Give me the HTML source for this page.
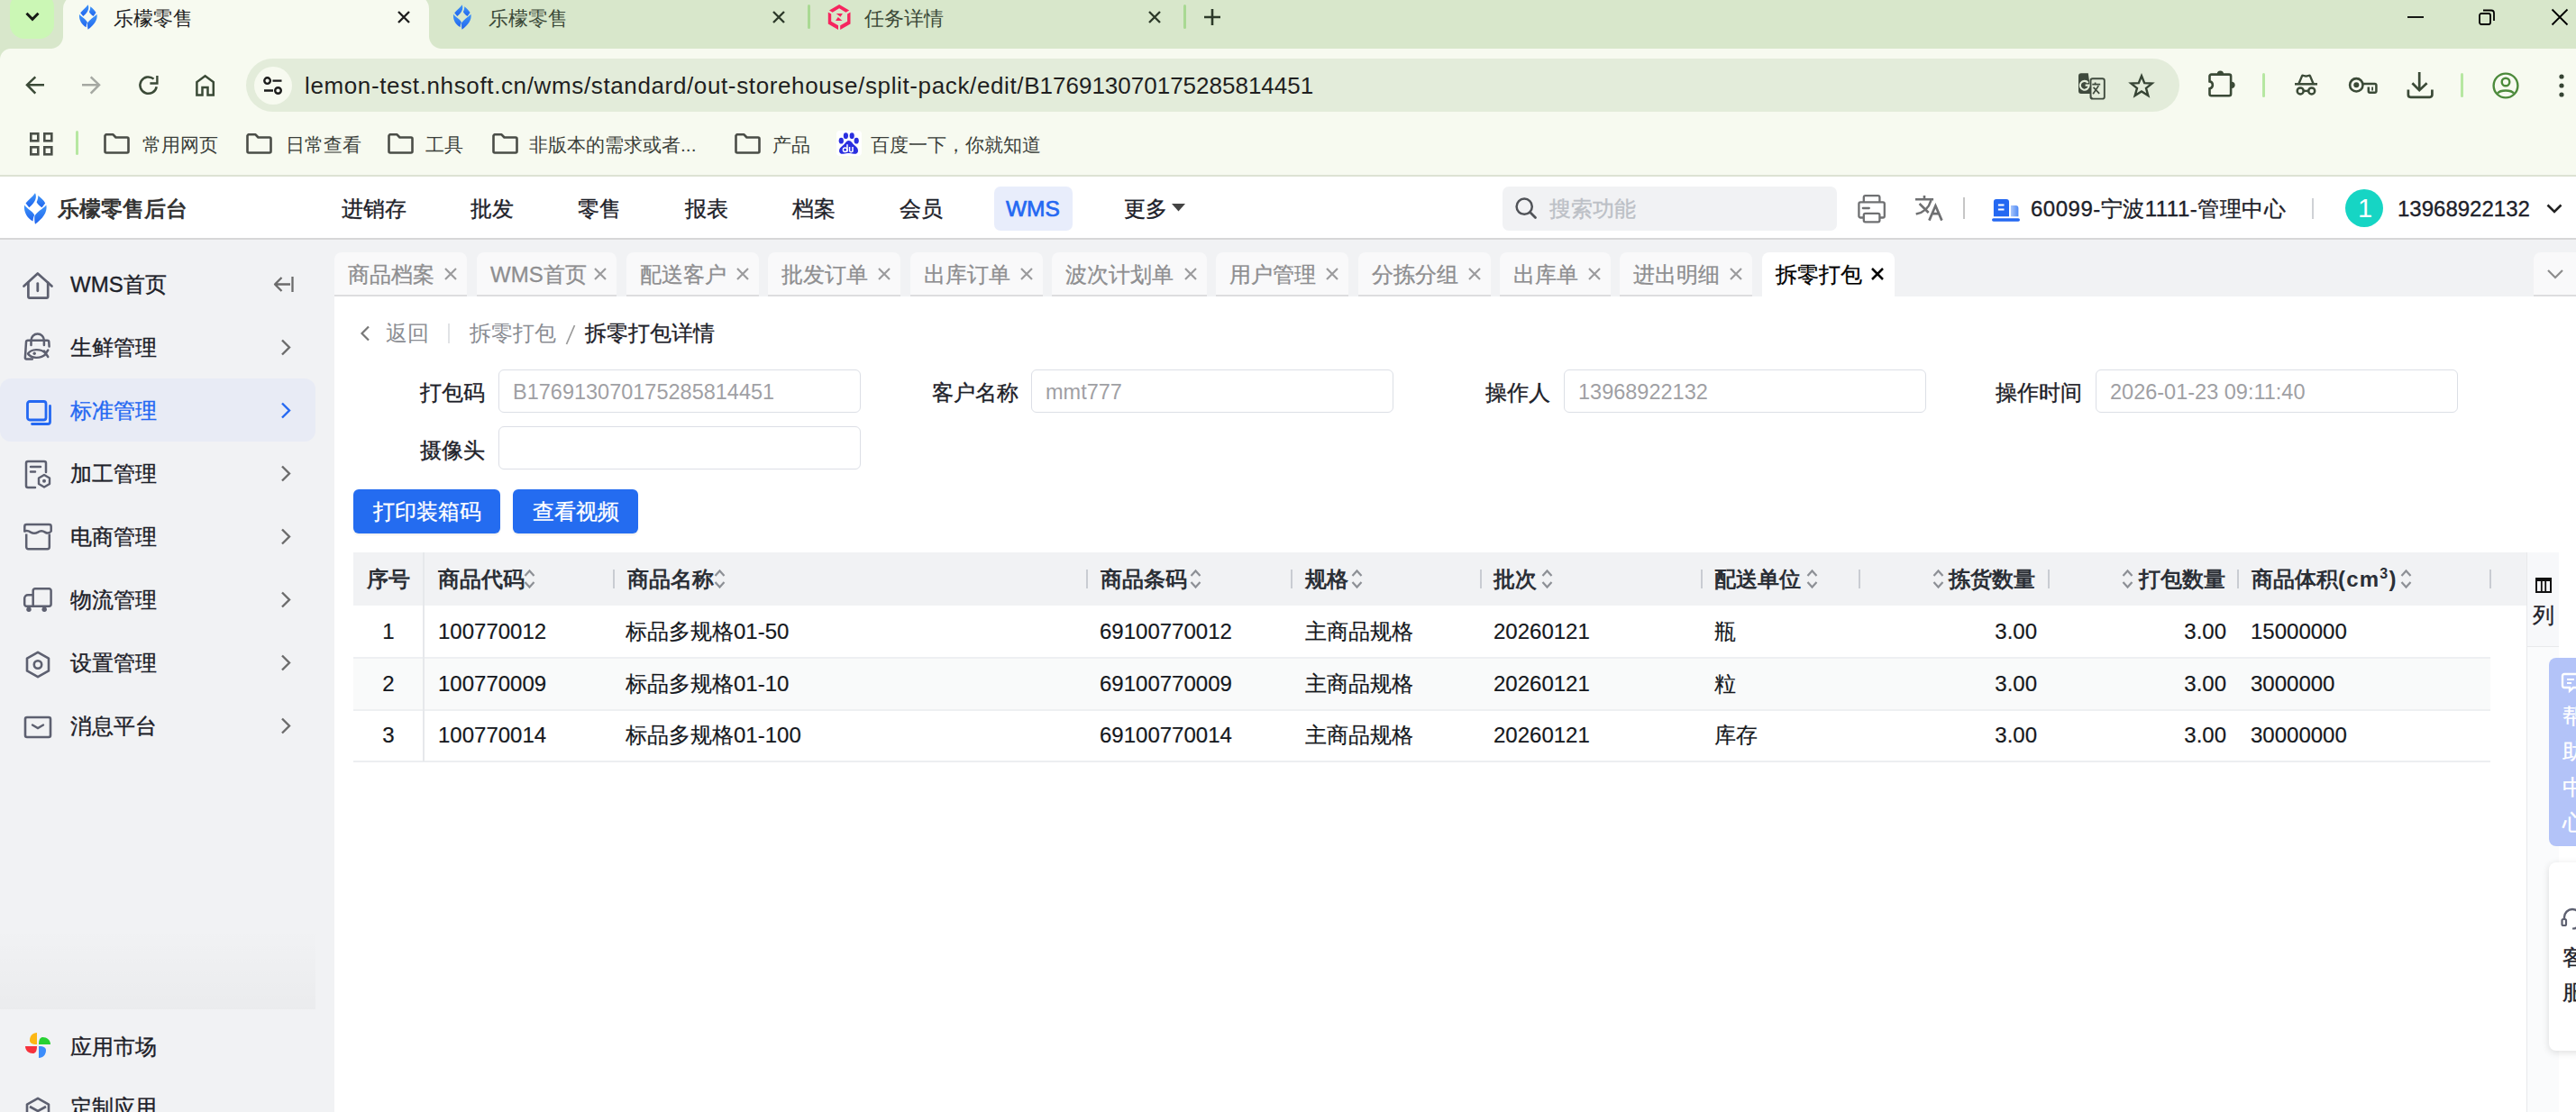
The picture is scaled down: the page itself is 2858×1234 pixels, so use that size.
<!DOCTYPE html>
<html><head><meta charset="utf-8">
<style>
*{box-sizing:border-box;margin:0;padding:0}
html,body{width:2858px;height:1234px;overflow:hidden;background:#fff;font-family:"Liberation Sans",sans-serif;}
.a{position:absolute}
svg{position:absolute;overflow:visible}
.nw{white-space:nowrap}
/* browser */
#frame{left:0;top:0;width:2858px;height:54px;background:#d8e7cb}
#toolbar{left:0;top:54px;width:2858px;height:142px;background:#f7faf0;border-bottom:2px solid #dde2d3}
.ttl{font-size:21.5px;line-height:24px;color:#1f1f1f;white-space:nowrap}
.bm{font-size:21px;line-height:24px;color:#3b3f3a;white-space:nowrap}
/* app */
#hdr{left:0;top:196px;width:2858px;height:70px;background:#fff;border-bottom:2px solid #d7d7d8}
.nav{-webkit-text-stroke-width:0.35px;font-size:24px;line-height:30px;color:#1d2129;white-space:nowrap;top:214px}
#side{left:0;top:266px;width:371px;height:968px;background:#f1f2f4}
#tabrow{left:371px;top:266px;width:2487px;height:63px;background:#f1f2f4}
#content{left:371px;top:329px;width:2487px;height:905px;background:#fff}
.si{-webkit-text-stroke-width:0.35px;font-size:24px;line-height:30px;color:#1d2129;white-space:nowrap;left:78px}
.tb{-webkit-text-stroke-width:0.3px;top:280px;height:49px;background:#f9f9fa;border-bottom:2px solid #dddddf;border-radius:8px 8px 0 0;font-size:24px;line-height:30px;color:#8e8e90;white-space:nowrap;padding-top:12px}
.lbl{-webkit-text-stroke-width:0.35px;font-size:24px;line-height:30px;color:#1d2129;white-space:nowrap;text-align:right}
.inp{height:48px;border:1.5px solid #dcdfe6;border-radius:6px;background:#fff;font-size:23.5px;line-height:49px;color:#9fa0a4;padding-left:15px;white-space:nowrap}
.btn{-webkit-text-stroke-width:0.3px;top:543px;height:49px;background:#246cf0;border-radius:6px;color:#fff;font-size:24px;line-height:49px;text-align:center;white-space:nowrap;box-shadow:0 2px 2px rgba(0,0,0,.06)}
.th{font-size:24px;line-height:30px;font-weight:bold;color:#2b2f36;white-space:nowrap;top:628px}
.td{-webkit-text-stroke-width:0.2px;font-size:24px;line-height:30px;color:#15181d;white-space:nowrap}
.rh{width:2px;height:21px;background:#c9ccd2;top:632px}
</style></head><body>

<!-- ============ BROWSER FRAME ============ -->
<div id="frame" class="a"></div>
<div id="toolbar" class="a"></div>

<!-- tabs -->
<div class="a" style="left:11px;top:-8px;width:49px;height:51px;background:#cbf7b5;border-radius:16px"></div>
<svg style="left:28px;top:13px" width="16" height="11" viewBox="0 0 16 11"><path d="M1.5 1.8L8 8.3L14.5 1.8" fill="none" stroke="#161a15" stroke-width="3"/></svg>
<div class="a" style="left:70px;top:-6px;width:406px;height:60px;background:#f7faf0;border-radius:16px 16px 0 0"></div>
<div class="a" style="left:56px;top:40px;width:14px;height:14px;background:radial-gradient(circle at 0 0,#d8e7cb 13.5px,#f7faf0 14.5px)"></div>
<div class="a" style="left:476px;top:40px;width:14px;height:14px;background:radial-gradient(circle at 100% 0,#d8e7cb 13.5px,#f7faf0 14.5px)"></div>
<div class="a" style="left:0;top:54px;width:12px;height:12px;background:radial-gradient(circle at 100% 100%,#f7faf0 11.5px,#d8e7cb 12.5px)"></div>
<svg style="left:88px;top:5px" width="20" height="28" viewBox="0 0 25 35"><defs><linearGradient id="lga" x1="0" y1="0" x2="0" y2="1"><stop offset="0" stop-color="#3f95f8"/><stop offset="1" stop-color="#2064ee"/></linearGradient></defs><path fill="url(#lga)" d="M12 0.3C14 4 13 10.5 5.3 16.3L1.5 11.6C4 8 9 5 12 0.3Z"/><path fill="url(#lga)" d="M15.3 2.9C18.5 5.5 21.5 8 23.2 11.4L19.5 16.3C17 14.5 14.8 12.5 13.6 10.2C14.8 8 15.3 5.5 15.3 2.9Z"/><path fill="url(#lga)" d="M0 13.4C3 17.5 9 20 11.2 24.6C10.2 27 9.6 29 9.6 31.6C3.5 28 -0.8 22 0 13.4Z"/><path fill="url(#lga)" d="M24.4 13.4C25.8 22 20 28.5 12 34.8C11.3 31.5 11 28 11.4 25.4C14 21 20 18 24.4 13.4Z"/></svg>
<div class="a ttl" style="left:126px;top:9px">乐檬零售</div>
<svg style="left:441px;top:12px" width="14" height="14" viewBox="0 0 14 14"><path d="M1 1L13 13M13 1L1 13" stroke="#1f1f1f" stroke-width="2.4"/></svg>
<svg style="left:503px;top:5px" width="20" height="28" viewBox="0 0 25 35"><defs><linearGradient id="lgb" x1="0" y1="0" x2="0" y2="1"><stop offset="0" stop-color="#3f95f8"/><stop offset="1" stop-color="#2064ee"/></linearGradient></defs><path fill="url(#lgb)" d="M12 0.3C14 4 13 10.5 5.3 16.3L1.5 11.6C4 8 9 5 12 0.3Z"/><path fill="url(#lgb)" d="M15.3 2.9C18.5 5.5 21.5 8 23.2 11.4L19.5 16.3C17 14.5 14.8 12.5 13.6 10.2C14.8 8 15.3 5.5 15.3 2.9Z"/><path fill="url(#lgb)" d="M0 13.4C3 17.5 9 20 11.2 24.6C10.2 27 9.6 29 9.6 31.6C3.5 28 -0.8 22 0 13.4Z"/><path fill="url(#lgb)" d="M24.4 13.4C25.8 22 20 28.5 12 34.8C11.3 31.5 11 28 11.4 25.4C14 21 20 18 24.4 13.4Z"/></svg>
<div class="a ttl" style="left:542px;top:9px;color:#3c4a38">乐檬零售</div>
<svg style="left:857px;top:12px" width="14" height="14" viewBox="0 0 14 14"><path d="M1 1L13 13M13 1L1 13" stroke="#2d3a2a" stroke-width="2.4"/></svg>
<div class="a" style="left:896px;top:5px;width:3px;height:27px;background:#a9d993;border-radius:2px"></div>
<svg style="left:912px;top:0px" width="38" height="38" viewBox="0 0 38 38"><g fill="#f6255f"><path d="M8 11.6L19.1 5L30.2 11.6L26.5 13.8L19.1 9.3L11.6 13.8Z"/><path d="M6.8 13.5L10.2 15.5V23.8L18 28.3V33L6.8 26.5Z"/><path d="M31.5 13.5V26.5L20.2 33V28.3L28.1 23.8V15.5Z"/><path d="M15.7 15H22.9L20.5 18.8Z"/><path d="M17.8 19L15 22.9H22.5Z"/></g></svg>
<div class="a ttl" style="left:959px;top:9px;color:#3c4a38">任务详情</div>
<svg style="left:1274px;top:12px" width="14" height="14" viewBox="0 0 14 14"><path d="M1 1L13 13M13 1L1 13" stroke="#2d3a2a" stroke-width="2.4"/></svg>
<div class="a" style="left:1313px;top:5px;width:3px;height:27px;background:#a9d993;border-radius:2px"></div>
<svg style="left:1336px;top:10px" width="18" height="18" viewBox="0 0 18 18"><path d="M9 0V18M0 9H18" stroke="#2d3a2a" stroke-width="2.6"/></svg>
<!-- window controls -->
<svg style="left:2671px;top:18px" width="18" height="2" viewBox="0 0 18 2"><path d="M0 1H18" stroke="#000" stroke-width="1.8"/></svg>
<svg style="left:2750px;top:10px" width="18" height="18" viewBox="0 0 18 18"><rect x="1" y="5" width="12" height="12" rx="2" fill="none" stroke="#000" stroke-width="1.8"/><path d="M5 1.5 H14 A3 3 0 0 1 17 4.5 V13" fill="none" stroke="#000" stroke-width="1.8"/></svg>
<svg style="left:2831px;top:10px" width="18" height="18" viewBox="0 0 18 18"><path d="M0.5 0.5L17.5 17.5M17.5 0.5L0.5 17.5" stroke="#000" stroke-width="1.8"/></svg>

<!-- toolbar -->
<svg style="left:28px;top:84px" width="22" height="22" viewBox="0 0 22 22"><path d="M21 10.2H2.8M11.3 1.3L2 10.2L11.3 19.6" fill="none" stroke="#3b4a37" stroke-width="2.5"/></svg>
<svg style="left:91px;top:84px" width="22" height="22" viewBox="0 0 22 22"><path d="M0 10.2H18.2M9.7 1.3L19 10.2L9.7 19.6" fill="none" stroke="#a5a8a2" stroke-width="2.5"/></svg>
<svg style="left:154px;top:84px" width="22" height="22" viewBox="0 0 22 22"><path d="M16.6 3.6A9.2 9.2 0 1 0 19.7 12.2" fill="none" stroke="#3b4a37" stroke-width="2.5"/><path d="M20.4 0V8.5H12.4" fill="none" stroke="#3b4a37" stroke-width="2.4"/></svg>
<svg style="left:217px;top:82px" width="22" height="25" viewBox="0 0 22 25"><path d="M1.4 23.5V9.1L10.6 2.2L19.8 9.1V23.5H13.5V15.1H7.5V23.5Z" fill="none" stroke="#3b4a37" stroke-width="2.5" stroke-linejoin="miter"/></svg>
<div class="a" style="left:273px;top:65px;width:2145px;height:59px;background:#e3ecda;border-radius:30px"></div>
<div class="a" style="left:282px;top:74px;width:42px;height:42px;background:#f7faf0;border-radius:21px"></div>
<svg style="left:292px;top:85px" width="22" height="21" viewBox="0 0 22 21"><circle cx="4.6" cy="4.6" r="3.3" fill="none" stroke="#1b1b1b" stroke-width="2.4"/><path d="M10.5 4.6H20.5M1 15.5H11" stroke="#1b1b1b" stroke-width="2.4"/><circle cx="16.5" cy="15.5" r="3.3" fill="none" stroke="#1b1b1b" stroke-width="2.4"/></svg>
<div class="a nw" id="url" style="left:338px;top:78px;font-size:26px;line-height:34px;color:#1f1f1f"><span style="letter-spacing:0.63px">lemon-test.nhsoft.cn/wms/standard/out-storehouse/split-pack/edit/</span>B176913070175285814451</div>
<svg style="left:2306px;top:81px" width="30" height="30" viewBox="0 0 30 30"><rect x="13.5" y="6.3" width="15.3" height="22.3" rx="2.2" fill="none" stroke="#3f4a3d" stroke-width="1.9"/><path d="M3 0.2H10.8L14.4 26.5L16.8 28.6H14.5L13.3 23H3A3 3 0 0 1 0 20V3.2A3 3 0 0 1 3 0.2Z" fill="#3f4a3d"/><path d="M10.6 10.8A4.9 4.9 0 1 0 11.6 13.6H7.6" fill="none" stroke="#e3ecda" stroke-width="2.1"/><path d="M15.3 12.6H24.2M18.6 10.6V12.6M22.3 14.1L16.2 23.2M16.6 15.8L23.2 22.8" fill="none" stroke="#3f4a3d" stroke-width="1.7"/></svg>
<svg style="left:2362px;top:82px" width="28" height="26" viewBox="0 0 28 26"><path d="M14 2.2L17.2 10.2L25.6 10.6L19 15.9L21.3 24L14 19.4L6.7 24L9 15.9L2.4 10.6L10.8 10.2Z" fill="none" stroke="#364434" stroke-width="2.4" stroke-linejoin="miter"/></svg>
<svg style="left:2450px;top:78px" width="30" height="30" viewBox="0 0 30 30"><path d="M3.5 4.6H23.1A2 2 0 0 1 25.1 6.6V26.2A2 2 0 0 1 23.1 28.2H3.5A2 2 0 0 1 1.5 26.2V20.3A4 4 0 0 0 1.5 12.4V6.6A2 2 0 0 1 3.5 4.6Z" fill="none" stroke="#3b4a37" stroke-width="2.6"/><path d="M9.8 4A3.6 3.6 0 0 1 17 4Z" fill="#3b4a37"/><path d="M26 12.7A3.6 3.6 0 0 1 26 19.9Z" fill="#3b4a37"/></svg>
<div class="a" style="left:2510px;top:81px;width:3px;height:27px;background:#b6e7a1;border-radius:2px"></div>
<svg style="left:2545px;top:81px" width="28" height="24" viewBox="0 0 28 24"><path d="M1 12.3H26" stroke="#3b4a37" stroke-width="2.5"/><path d="M5.6 11.5L8.9 3.6Q9.4 2.6 10.5 2.9L13.5 3.6L16.5 2.9Q17.6 2.6 18.1 3.6L21.4 11.5" fill="none" stroke="#3b4a37" stroke-width="2.4" stroke-linejoin="round"/><circle cx="7.2" cy="19.9" r="3.5" fill="none" stroke="#3b4a37" stroke-width="2.5"/><circle cx="19.7" cy="19.9" r="3.5" fill="none" stroke="#3b4a37" stroke-width="2.5"/><path d="M10.6 19.9H16.3" stroke="#3b4a37" stroke-width="2.4"/></svg>
<svg style="left:2605px;top:85px" width="33" height="20" viewBox="0 0 33 20"><circle cx="9.3" cy="9.3" r="7.2" fill="none" stroke="#3b4a37" stroke-width="2.6"/><circle cx="9.3" cy="9.3" r="3" fill="#3b4a37"/><path d="M16 7.9H29.9A1.5 1.5 0 0 1 31.4 9.4V16.3A1.5 1.5 0 0 1 29.9 17.8H24.3A1.5 1.5 0 0 1 22.8 16.3V11.4" fill="none" stroke="#3b4a37" stroke-width="2.5"/><path d="M27.1 11.5V15.5" stroke="#3b4a37" stroke-width="1.8"/></svg>
<svg style="left:2669px;top:79px" width="32" height="31" viewBox="0 0 32 31"><path d="M15.2 1V20.5M7.4 13.3L15.2 21.2L23.6 13.3" fill="none" stroke="#3b4a37" stroke-width="2.7"/><path d="M2.9 20.5V26.3A2.5 2.5 0 0 0 5.4 28.8H26.9A2.5 2.5 0 0 0 29.4 26.3V20.5" fill="none" stroke="#3b4a37" stroke-width="2.7"/></svg>
<div class="a" style="left:2730px;top:81px;width:3px;height:27px;background:#b6e7a1;border-radius:2px"></div>
<svg style="left:2765px;top:80px" width="30" height="30" viewBox="0 0 30 30"><circle cx="15" cy="15" r="13.4" fill="none" stroke="#4c8a3b" stroke-width="2.4"/><circle cx="15" cy="11" r="4.3" fill="none" stroke="#4c8a3b" stroke-width="2.4"/><path d="M6 23.5C9 19.5 21 19.5 24 23.5" fill="none" stroke="#4c8a3b" stroke-width="2.4"/></svg>
<svg style="left:2839px;top:82px" width="6" height="26" viewBox="0 0 6 26"><circle cx="3" cy="3" r="2.6" fill="#364434"/><circle cx="3" cy="13" r="2.6" fill="#364434"/><circle cx="3" cy="23" r="2.6" fill="#364434"/></svg>

<!-- bookmarks -->
<svg style="left:33px;top:147px" width="26" height="26" viewBox="0 0 26 26"><rect x="1.3" y="1.3" width="8" height="8" fill="none" stroke="#4a4f48" stroke-width="2.6"/><rect x="16.3" y="1.3" width="8" height="8" fill="none" stroke="#4a4f48" stroke-width="2.6"/><rect x="1.3" y="16.3" width="8" height="8" fill="none" stroke="#4a4f48" stroke-width="2.6"/><rect x="16.3" y="16.3" width="8" height="8" fill="none" stroke="#4a4f48" stroke-width="2.6"/></svg>
<div class="a" style="left:84px;top:145px;width:3px;height:27px;background:#b6e7a1;border-radius:2px"></div>
<svg style="left:115px;top:148px" width="29" height="23" viewBox="0 0 29 23"><path d="M2.5 1.3H10.5L13.5 4.5H26A1.5 1.5 0 0 1 27.5 6V20A1.5 1.5 0 0 1 26 21.5H3A1.5 1.5 0 0 1 1.5 20V2.5Z" fill="none" stroke="#4a4d47" stroke-width="2.6" stroke-linejoin="round"/></svg>
<div class="a bm" style="left:158px;top:149px">常用网页</div>
<svg style="left:273px;top:148px" width="29" height="23" viewBox="0 0 29 23"><path d="M2.5 1.3H10.5L13.5 4.5H26A1.5 1.5 0 0 1 27.5 6V20A1.5 1.5 0 0 1 26 21.5H3A1.5 1.5 0 0 1 1.5 20V2.5Z" fill="none" stroke="#4a4d47" stroke-width="2.6" stroke-linejoin="round"/></svg>
<div class="a bm" style="left:317px;top:149px">日常查看</div>
<svg style="left:430px;top:148px" width="29" height="23" viewBox="0 0 29 23"><path d="M2.5 1.3H10.5L13.5 4.5H26A1.5 1.5 0 0 1 27.5 6V20A1.5 1.5 0 0 1 26 21.5H3A1.5 1.5 0 0 1 1.5 20V2.5Z" fill="none" stroke="#4a4d47" stroke-width="2.6" stroke-linejoin="round"/></svg>
<div class="a bm" style="left:472px;top:149px">工具</div>
<svg style="left:546px;top:148px" width="29" height="23" viewBox="0 0 29 23"><path d="M2.5 1.3H10.5L13.5 4.5H26A1.5 1.5 0 0 1 27.5 6V20A1.5 1.5 0 0 1 26 21.5H3A1.5 1.5 0 0 1 1.5 20V2.5Z" fill="none" stroke="#4a4d47" stroke-width="2.6" stroke-linejoin="round"/></svg>
<div class="a bm" style="left:587px;top:149px">非版本的需求或者...</div>
<svg style="left:815px;top:148px" width="29" height="23" viewBox="0 0 29 23"><path d="M2.5 1.3H10.5L13.5 4.5H26A1.5 1.5 0 0 1 27.5 6V20A1.5 1.5 0 0 1 26 21.5H3A1.5 1.5 0 0 1 1.5 20V2.5Z" fill="none" stroke="#4a4d47" stroke-width="2.6" stroke-linejoin="round"/></svg>
<div class="a bm" style="left:857px;top:149px">产品</div>
<div class="a" style="left:928px;top:145px;width:28px;height:28px;background:#fff;border-radius:4px"></div>
<svg style="left:928px;top:145px" width="28" height="28" viewBox="0 0 28 28"><g fill="#2a2fe0"><ellipse cx="5.3" cy="11.2" rx="2.6" ry="3.4"/><ellipse cx="10.4" cy="5.7" rx="2.6" ry="3.4"/><ellipse cx="17.2" cy="5.7" rx="2.6" ry="3.4"/><ellipse cx="22.2" cy="11.2" rx="2.6" ry="3.4"/><path d="M13.6 10.9C16.5 10.9 18 14.5 20.5 16.5C23 18.5 24 20 24 22.5C24 25 22 26 19.5 25.8C17 25.6 15.5 25 13.6 25C11.5 25 10 25.6 7.5 25.8C5 26 3 25 3 22.5C3 20 4.5 18.5 7 16.5C9.5 14.5 11 10.9 13.6 10.9Z"/></g><circle cx="9.6" cy="21.3" r="2.2" fill="none" stroke="#fff" stroke-width="1.5"/><path d="M12 15.2V23.6M14.6 18V22A1.7 1.7 0 0 0 18 22V18M18 21V23.6" fill="none" stroke="#fff" stroke-width="1.5"/></svg>
<div class="a bm" style="left:966px;top:149px">百度一下，你就知道</div>

<!-- ============ APP HEADER ============ -->
<div id="hdr" class="a"></div>

<svg style="left:27px;top:214px" width="25" height="35" viewBox="0 0 25 35"><defs><linearGradient id="lgh" x1="0" y1="0" x2="0" y2="1"><stop offset="0" stop-color="#3f95f8"/><stop offset="1" stop-color="#2064ee"/></linearGradient></defs><path fill="url(#lgh)" d="M12 0.3C14 4 13 10.5 5.3 16.3L1.5 11.6C4 8 9 5 12 0.3Z"/><path fill="url(#lgh)" d="M15.3 2.9C18.5 5.5 21.5 8 23.2 11.4L19.5 16.3C17 14.5 14.8 12.5 13.6 10.2C14.8 8 15.3 5.5 15.3 2.9Z"/><path fill="url(#lgh)" d="M0 13.4C3 17.5 9 20 11.2 24.6C10.2 27 9.6 29 9.6 31.6C3.5 28 -0.8 22 0 13.4Z"/><path fill="url(#lgh)" d="M24.4 13.4C25.8 22 20 28.5 12 34.8C11.3 31.5 11 28 11.4 25.4C14 21 20 18 24.4 13.4Z"/></svg>
<div class="a nw" style="left:64px;top:217px;font-size:24px;line-height:30px;font-weight:bold;color:#333">乐檬零售后台</div>
<div class="a nav" style="left:379px;top:217px">进销存</div>
<div class="a nav" style="left:522px;top:217px">批发</div>
<div class="a nav" style="left:641px;top:217px">零售</div>
<div class="a nav" style="left:760px;top:217px">报表</div>
<div class="a nav" style="left:879px;top:217px">档案</div>
<div class="a nav" style="left:998px;top:217px">会员</div>
<div class="a" style="left:1103px;top:207px;width:87px;height:49px;background:#e8edfb;border-radius:7px"></div>
<div class="a nav" style="left:1116px;top:217px;color:#2468f2;font-size:24.5px;-webkit-text-stroke-width:0.7px">WMS</div>
<div class="a nav" style="left:1247px;top:217px">更多</div>
<svg style="left:1300px;top:226px" width="15" height="9" viewBox="0 0 15 9"><path d="M0 0H15L7.5 8.5Z" fill="#444"/></svg>
<div class="a" style="left:1667px;top:207px;width:371px;height:49px;background:#f1f2f4;border-radius:7px"></div>
<svg style="left:1681px;top:219px" width="24" height="24" viewBox="0 0 24 24"><circle cx="10.2" cy="10.2" r="8.6" fill="none" stroke="#505358" stroke-width="2.5"/><path d="M16.5 16.5L22.5 22.5" stroke="#505358" stroke-width="2.8" stroke-linecap="round"/></svg>
<div class="a nav" style="left:1719px;top:217px;color:#bcc0c6">搜索功能</div>
<svg style="left:2060px;top:215px" width="34" height="34" viewBox="0 0 34 34"><rect x="7.8" y="2.2" width="17.6" height="8.8" rx="1.8" fill="none" stroke="#6f7072" stroke-width="2.3"/><path d="M7.8 26.5H4.2A1.8 1.8 0 0 1 2.4 24.7V11.1A1.8 1.8 0 0 1 4.2 9.3H29A1.8 1.8 0 0 1 30.8 11.1V24.7A1.8 1.8 0 0 1 29 26.5H25.4" fill="#fff" stroke="#6f7072" stroke-width="2.3"/><rect x="7.8" y="21.8" width="17.6" height="9.6" rx="1.8" fill="#fff" stroke="#6f7072" stroke-width="2.3"/><path d="M6.8 16H13.8" stroke="#6f7072" stroke-width="2.3" stroke-linecap="round"/></svg>
<svg style="left:2122px;top:215px" width="34" height="32" viewBox="0 0 34 32"><path d="M3 6.3H23.1M13 2V6.3M20.4 7.5C18.5 14 14 20.5 3.7 22.6M7.6 11L17.7 21" fill="none" stroke="#6f7072" stroke-width="2.6"/><path d="M18.4 29.6L25.4 13.3L32.4 29.6M21 22.2H29.6" fill="none" stroke="#6f7072" stroke-width="2.7"/></svg>
<div class="a" style="left:2178px;top:219px;width:2px;height:24px;background:#c6c6c6"></div>
<svg style="left:2208px;top:219px" width="35" height="28" viewBox="0 0 35 28"><defs><linearGradient id="cg" x1="0" y1="0" x2="1" y2="0"><stop offset="0" stop-color="#a9c6fb"/><stop offset="1" stop-color="#4f8af5"/></linearGradient></defs><path d="M3.9 21.3V4.9A3 3 0 0 1 6.9 1.9H18A3 3 0 0 1 21 4.9V21.3Z" fill="#2468f2"/><path d="M8.9 8.5H15.5M8.9 13.6H15.5" stroke="#fff" stroke-width="2"/><path d="M22.9 21.3V8.9H28.4A3 3 0 0 1 31.4 11.9V21.3Z" fill="url(#cg)"/><rect x="2" y="23.3" width="31" height="3.5" rx="1.75" fill="#2468f2"/></svg>
<div class="a nav" style="left:2253px;top:217px;letter-spacing:0.5px">60099-宁波1111-管理中心</div>
<div class="a" style="left:2565px;top:220px;width:2px;height:23px;background:#cfd1d5"></div>
<div class="a" style="left:2602px;top:210px;width:42px;height:42px;border-radius:21px;background:#16d5c4"></div>
<div class="a nw" style="left:2603px;top:214px;width:42px;text-align:center;font-size:29px;line-height:34px;color:#fff">1</div>
<div class="a nav" style="left:2660px;top:217px;font-size:24px">13968922132</div>
<svg style="left:2825px;top:226px" width="18" height="11" viewBox="0 0 18 11"><path d="M1.5 1.5L9 9L16.5 1.5" fill="none" stroke="#222" stroke-width="2.6"/></svg>

<!-- ============ SIDEBAR / TABROW / CONTENT ============ -->
<div id="side" class="a"></div>

<div class="a" style="left:0;top:420px;width:350px;height:70px;background:#e8ebf5;border-radius:12px"></div>
<svg style="left:25px;top:302px" width="34" height="30" viewBox="0 0 34 30"><path d="M1.5 15.5L16.8 1.5L32.5 15.5" fill="none" stroke="#5d6070" stroke-width="2.7" stroke-linecap="round" stroke-linejoin="round"/><path d="M6.4 11.5V27A1.6 1.6 0 0 0 8 28.6H26.6A1.6 1.6 0 0 0 28.2 27V11.5" fill="none" stroke="#5d6070" stroke-width="2.7" stroke-linecap="round"/><path d="M16.8 12.6V20.8" stroke="#5d6070" stroke-width="2.8" stroke-linecap="round"/></svg>
<div class="a si" style="top:301px">WMS首页</div>
<svg style="left:303px;top:306px" width="23" height="19" viewBox="0 0 23 19"><path d="M21.5 1V18M19 9.5H2M9.5 2L2 9.5L9.5 17" fill="none" stroke="#6b6b6b" stroke-width="2.3" stroke-linejoin="round"/></svg>

<svg style="left:26px;top:370px" width="31" height="32" viewBox="0 0 31 32"><path d="M8.5 13V7.7A7.2 7.2 0 0 1 22.9 7.7V13" fill="none" stroke="#5d6070" stroke-width="2.5" stroke-linecap="round"/><path d="M9.8 28.5H3.2A1.3 1.3 0 0 1 1.9 27.1L3 9.6A1.9 1.9 0 0 1 4.9 7.7H26.4A1.9 1.9 0 0 1 28.3 9.6L28.6 14.5" fill="none" stroke="#5d6070" stroke-width="2.5" stroke-linecap="round" stroke-linejoin="round"/><path d="M5 22.5C8.5 17 19 16.5 24.5 21.8M5 22.5C8.5 28 19 28.5 24.5 23.2M23 19.5L27.3 26M27.3 18.5L23.6 24" fill="none" stroke="#5d6070" stroke-width="2.4" stroke-linecap="round"/><circle cx="12.2" cy="22.3" r="1.7" fill="#5d6070"/></svg>
<div class="a si" style="top:371px">生鲜管理</div>

<svg style="left:29px;top:444px" width="28" height="28" viewBox="0 0 28 28"><rect x="1.5" y="1.5" width="20.5" height="20.5" rx="2.5" fill="none" stroke="#2468f2" stroke-width="2.8"/><path d="M26.5 6.5V24A2.5 2.5 0 0 1 24 26.5H6.5" fill="none" stroke="#2468f2" stroke-width="2.8" stroke-linecap="round"/></svg>
<div class="a si" style="top:441px;color:#2468f2">标准管理</div>

<svg style="left:27px;top:510px" width="31" height="33" viewBox="0 0 31 33"><path d="M12 31H4A2 2 0 0 1 2 29V4A2 2 0 0 1 4 2H22A2 2 0 0 1 24 4V14" fill="none" stroke="#5d6070" stroke-width="2.5" stroke-linecap="round"/><path d="M7 8H18M7 13.5H12" stroke="#5d6070" stroke-width="2.5" stroke-linecap="round"/><path d="M22 17L28 20.5V27L22 30.5L16 27V20.5Z" fill="none" stroke="#5d6070" stroke-width="2.4" stroke-linejoin="round"/><circle cx="22" cy="23.8" r="2" fill="#5d6070"/></svg>
<div class="a si" style="top:511px">加工管理</div>

<svg style="left:26px;top:581px" width="32" height="30" viewBox="0 0 32 30"><path d="M1.3 8.5V3.3A2.2 2.2 0 0 1 3.5 1.1H28.5A2.2 2.2 0 0 1 30.7 3.3V8.5Q27.5 12 24 9.6Q20 7 16 9.6Q12 12 8 9.6Q4.5 7.3 1.3 8.5Z" fill="none" stroke="#5d6070" stroke-width="2.5" stroke-linejoin="round"/><path d="M3.2 11.5V26A2.2 2.2 0 0 0 5.4 28.2H26.6A2.2 2.2 0 0 0 28.8 26V11.5" fill="none" stroke="#5d6070" stroke-width="2.5"/></svg>
<div class="a si" style="top:581px">电商管理</div>

<svg style="left:26px;top:652px" width="32" height="28" viewBox="0 0 32 28"><path d="M10.7 20.8V3.5A2.2 2.2 0 0 1 12.9 1.3H28.4A2.2 2.2 0 0 1 30.6 3.5V18.6A2.2 2.2 0 0 1 28.4 20.8H10.7M10.7 8.3H5A3.8 3.8 0 0 0 1.2 12.1V18.6A2.2 2.2 0 0 0 3.4 20.8H10.7" fill="none" stroke="#5d6070" stroke-width="2.5" stroke-linejoin="round"/><circle cx="6" cy="24.2" r="2.7" fill="#5d6070"/><circle cx="23.2" cy="24.2" r="2.7" fill="#5d6070"/></svg>
<div class="a si" style="top:651px">物流管理</div>

<svg style="left:28px;top:722px" width="28" height="31" viewBox="0 0 28 31"><path d="M14 1.8L26 8.6V22.4L14 29.2L2 22.4V8.6Z" fill="none" stroke="#5d6070" stroke-width="2.6" stroke-linejoin="round"/><circle cx="14" cy="15.5" r="4.2" fill="none" stroke="#5d6070" stroke-width="2.6"/></svg>
<div class="a si" style="top:721px">设置管理</div>

<svg style="left:26px;top:794px" width="32" height="26" viewBox="0 0 32 26"><rect x="2" y="2" width="28" height="22" rx="2" fill="none" stroke="#5d6070" stroke-width="2.6"/><path d="M10 10.5L16 14L22 10.5" fill="none" stroke="#5d6070" stroke-width="2.4" stroke-linecap="round"/></svg>
<div class="a si" style="top:791px">消息平台</div>
<svg style="left:311px;top:376px" width="12" height="19" viewBox="0 0 12 19"><path d="M2 1.5L10 9.5L2 17.5" fill="none" stroke="#6b6b6b" stroke-width="2.4"/></svg>
<svg style="left:311px;top:446px" width="12" height="19" viewBox="0 0 12 19"><path d="M2 1.5L10 9.5L2 17.5" fill="none" stroke="#2468f2" stroke-width="2.4"/></svg>
<svg style="left:311px;top:516px" width="12" height="19" viewBox="0 0 12 19"><path d="M2 1.5L10 9.5L2 17.5" fill="none" stroke="#6b6b6b" stroke-width="2.4"/></svg>
<svg style="left:311px;top:586px" width="12" height="19" viewBox="0 0 12 19"><path d="M2 1.5L10 9.5L2 17.5" fill="none" stroke="#6b6b6b" stroke-width="2.4"/></svg>
<svg style="left:311px;top:656px" width="12" height="19" viewBox="0 0 12 19"><path d="M2 1.5L10 9.5L2 17.5" fill="none" stroke="#6b6b6b" stroke-width="2.4"/></svg>
<svg style="left:311px;top:726px" width="12" height="19" viewBox="0 0 12 19"><path d="M2 1.5L10 9.5L2 17.5" fill="none" stroke="#6b6b6b" stroke-width="2.4"/></svg>
<svg style="left:311px;top:796px" width="12" height="19" viewBox="0 0 12 19"><path d="M2 1.5L10 9.5L2 17.5" fill="none" stroke="#6b6b6b" stroke-width="2.4"/></svg>

<div class="a" style="left:0;top:1030px;width:350px;height:90px;background:linear-gradient(rgba(0,0,0,0),rgba(0,0,0,.028))"></div>
<svg style="left:26px;top:1144px" width="32" height="32" viewBox="0 0 32 32"><path d="M15 15V2C10 2 7 6 7 10.5C7 13 9 15 15 15Z" fill="#fdb714"/><path d="M17 15H30C30 10 26 7 21.5 7C19 7 17 9 17 15Z" fill="#27d132"/><path d="M17 17V30C22 30 25 26 25 21.5C25 19 23 17 17 17Z" fill="#3c8dfb"/><path d="M15 17H2C2 22 6 25 10.5 25C13 25 15 23 15 17Z" fill="#f6323c"/></svg>
<div class="a si" style="top:1147px">应用市场</div>
<svg style="left:28px;top:1217px" width="28" height="30" viewBox="0 0 28 30"><path d="M14 1.8L26 8.6V22.4L14 29.2L2 22.4V8.6Z" fill="none" stroke="#5d6070" stroke-width="2.6" stroke-linejoin="round"/><path d="M5 11L14 16L23 11" fill="none" stroke="#5d6070" stroke-width="2.6"/></svg>
<div class="a si" style="top:1214px">定制应用</div>
<div id="tabrow" class="a"></div>
<div class="a tb" style="left:371px;width:147px"><span class="a" style="left:15px;top:10px">商品档案</span></div>
<svg style="left:493px;top:297px" width="14" height="14" viewBox="0 0 14 14"><path d="M1 1L13 13M13 1L1 13" stroke="#9b9b9d" stroke-width="2.2"/></svg>
<div class="a tb" style="left:529px;width:155px"><span class="a" style="left:15px;top:10px">WMS首页</span></div>
<svg style="left:659px;top:297px" width="14" height="14" viewBox="0 0 14 14"><path d="M1 1L13 13M13 1L1 13" stroke="#9b9b9d" stroke-width="2.2"/></svg>
<div class="a tb" style="left:695px;width:147px"><span class="a" style="left:15px;top:10px">配送客户</span></div>
<svg style="left:817px;top:297px" width="14" height="14" viewBox="0 0 14 14"><path d="M1 1L13 13M13 1L1 13" stroke="#9b9b9d" stroke-width="2.2"/></svg>
<div class="a tb" style="left:852px;width:147px"><span class="a" style="left:15px;top:10px">批发订单</span></div>
<svg style="left:974px;top:297px" width="14" height="14" viewBox="0 0 14 14"><path d="M1 1L13 13M13 1L1 13" stroke="#9b9b9d" stroke-width="2.2"/></svg>
<div class="a tb" style="left:1010px;width:147px"><span class="a" style="left:15px;top:10px">出库订单</span></div>
<svg style="left:1132px;top:297px" width="14" height="14" viewBox="0 0 14 14"><path d="M1 1L13 13M13 1L1 13" stroke="#9b9b9d" stroke-width="2.2"/></svg>
<div class="a tb" style="left:1167px;width:172px"><span class="a" style="left:15px;top:10px">波次计划单</span></div>
<svg style="left:1314px;top:297px" width="14" height="14" viewBox="0 0 14 14"><path d="M1 1L13 13M13 1L1 13" stroke="#9b9b9d" stroke-width="2.2"/></svg>
<div class="a tb" style="left:1349px;width:147px"><span class="a" style="left:15px;top:10px">用户管理</span></div>
<svg style="left:1471px;top:297px" width="14" height="14" viewBox="0 0 14 14"><path d="M1 1L13 13M13 1L1 13" stroke="#9b9b9d" stroke-width="2.2"/></svg>
<div class="a tb" style="left:1507px;width:147px"><span class="a" style="left:15px;top:10px">分拣分组</span></div>
<svg style="left:1629px;top:297px" width="14" height="14" viewBox="0 0 14 14"><path d="M1 1L13 13M13 1L1 13" stroke="#9b9b9d" stroke-width="2.2"/></svg>
<div class="a tb" style="left:1664px;width:123px"><span class="a" style="left:15px;top:10px">出库单</span></div>
<svg style="left:1762px;top:297px" width="14" height="14" viewBox="0 0 14 14"><path d="M1 1L13 13M13 1L1 13" stroke="#9b9b9d" stroke-width="2.2"/></svg>
<div class="a tb" style="left:1797px;width:147px"><span class="a" style="left:15px;top:10px">进出明细</span></div>
<svg style="left:1919px;top:297px" width="14" height="14" viewBox="0 0 14 14"><path d="M1 1L13 13M13 1L1 13" stroke="#9b9b9d" stroke-width="2.2"/></svg>
<div class="a tb" style="left:1955px;width:147px;background:#fff;border-bottom:none;color:#000"><span class="a" style="left:15px;top:10px">拆零打包</span></div>
<svg style="left:2076px;top:297px" width="14" height="14" viewBox="0 0 14 14"><path d="M1 1L13 13M13 1L1 13" stroke="#000" stroke-width="2.5"/></svg>
<div class="a tb" style="left:2811px;width:60px"></div>
<svg style="left:2826px;top:299px" width="18" height="11" viewBox="0 0 18 11"><path d="M1 1L9 9L17 1" fill="none" stroke="#8c8c8c" stroke-width="2.2"/></svg>
<div id="content" class="a"></div>

<svg style="left:399px;top:361px" width="12" height="18" viewBox="0 0 12 18"><path d="M10 1.5L2.5 9L10 16.5" fill="none" stroke="#777" stroke-width="2.2"/></svg>
<div class="a nw" style="left:428px;top:355px;font-size:24px;line-height:30px;color:#8a8d93">返回</div>
<div class="a" style="left:497px;top:359px;width:2px;height:22px;background:#e1e3e6"></div>
<div class="a nw" style="left:521px;top:355px;font-size:24px;line-height:30px;color:#8a8d93">拆零打包</div>
<svg style="left:620px;top:355px" width="24" height="30" viewBox="0 0 24 30"><path d="M17.5 6L8.5 27" stroke="#9a9a9a" stroke-width="1.7"/></svg>
<div class="a nw" style="left:649px;top:355px;font-size:24px;line-height:30px;color:#1d2129;-webkit-text-stroke-width:0.3px">拆零打包详情</div>

<div class="a lbl" style="left:400px;width:138px;top:421px">打包码</div>
<div class="a inp" style="left:553px;top:410px;width:402px">B176913070175285814451</div>
<div class="a lbl" style="left:990px;width:140px;top:421px">客户名称</div>
<div class="a inp" style="left:1144px;top:410px;width:402px">mmt777</div>
<div class="a lbl" style="left:1580px;width:140px;top:421px">操作人</div>
<div class="a inp" style="left:1735px;top:410px;width:402px">13968922132</div>
<div class="a lbl" style="left:2170px;width:140px;top:421px">操作时间</div>
<div class="a inp" style="left:2325px;top:410px;width:402px">2026-01-23 09:11:40</div>
<div class="a lbl" style="left:400px;width:138px;top:485px">摄像头</div>
<div class="a inp" style="left:553px;top:473px;width:402px"></div>

<div class="a btn" style="left:392px;width:163px">打印装箱码</div>
<div class="a btn" style="left:569px;width:139px">查看视频</div>

<!-- table -->
<div class="a" style="left:392px;top:613px;width:2412px;height:59px;background:#f1f2f4"></div>
<div class="a" style="left:392px;top:730px;width:2371px;height:58px;background:#f9fafa"></div>
<div class="a" style="left:392px;top:729px;width:2371px;height:1.5px;background:#eef0f2"></div>
<div class="a" style="left:392px;top:787px;width:2371px;height:1.5px;background:#eef0f2"></div>
<div class="a" style="left:392px;top:844px;width:2371px;height:2px;background:#eceef1"></div>
<div class="a" style="left:469px;top:613px;width:2px;height:232px;background:#e6e8eb"></div>
<div class="a rh" style="left:680px"></div>
<div class="a rh" style="left:1205px"></div>
<div class="a rh" style="left:1432px"></div>
<div class="a rh" style="left:1642px"></div>
<div class="a rh" style="left:1887px"></div>
<div class="a rh" style="left:2062px"></div>
<div class="a rh" style="left:2272px"></div>
<div class="a rh" style="left:2482px"></div>
<div class="a rh" style="left:2762px"></div>
<div class="a th" style="left:407px">序号</div>
<div class="a th" style="left:486px">商品代码</div>
<svg style="left:581px;top:631px" width="13" height="23" viewBox="0 0 13 23"><path d="M1.5 8L6.5 2.5L11.5 8M1.5 15L6.5 20.5L11.5 15" fill="none" stroke="#8d9096" stroke-width="2.2"/></svg>
<div class="a th" style="left:696px">商品名称</div>
<svg style="left:792px;top:631px" width="13" height="23" viewBox="0 0 13 23"><path d="M1.5 8L6.5 2.5L11.5 8M1.5 15L6.5 20.5L11.5 15" fill="none" stroke="#8d9096" stroke-width="2.2"/></svg>
<div class="a th" style="left:1221px">商品条码</div>
<svg style="left:1320px;top:631px" width="13" height="23" viewBox="0 0 13 23"><path d="M1.5 8L6.5 2.5L11.5 8M1.5 15L6.5 20.5L11.5 15" fill="none" stroke="#8d9096" stroke-width="2.2"/></svg>
<div class="a th" style="left:1448px">规格</div>
<svg style="left:1499px;top:631px" width="13" height="23" viewBox="0 0 13 23"><path d="M1.5 8L6.5 2.5L11.5 8M1.5 15L6.5 20.5L11.5 15" fill="none" stroke="#8d9096" stroke-width="2.2"/></svg>
<div class="a th" style="left:1657px">批次</div>
<svg style="left:1710px;top:631px" width="13" height="23" viewBox="0 0 13 23"><path d="M1.5 8L6.5 2.5L11.5 8M1.5 15L6.5 20.5L11.5 15" fill="none" stroke="#8d9096" stroke-width="2.2"/></svg>
<div class="a th" style="left:1902px">配送单位</div>
<svg style="left:2004px;top:631px" width="13" height="23" viewBox="0 0 13 23"><path d="M1.5 8L6.5 2.5L11.5 8M1.5 15L6.5 20.5L11.5 15" fill="none" stroke="#8d9096" stroke-width="2.2"/></svg>
<div class="a th" style="left:2162px">拣货数量</div>
<svg style="left:2144px;top:631px" width="13" height="23" viewBox="0 0 13 23"><path d="M1.5 8L6.5 2.5L11.5 8M1.5 15L6.5 20.5L11.5 15" fill="none" stroke="#8d9096" stroke-width="2.2"/></svg>
<div class="a th" style="left:2373px">打包数量</div>
<svg style="left:2354px;top:631px" width="13" height="23" viewBox="0 0 13 23"><path d="M1.5 8L6.5 2.5L11.5 8M1.5 15L6.5 20.5L11.5 15" fill="none" stroke="#8d9096" stroke-width="2.2"/></svg>
<div class="a th" style="left:2498px">商品体积<span style="letter-spacing:1.2px">(cm<span style="font-size:16px;position:relative;top:-9px;vertical-align:baseline;line-height:0">3</span>)</span></div>
<svg style="left:2663px;top:631px" width="13" height="23" viewBox="0 0 13 23"><path d="M1.5 8L6.5 2.5L11.5 8M1.5 15L6.5 20.5L11.5 15" fill="none" stroke="#8d9096" stroke-width="2.2"/></svg>
<div class="a td" style="left:392px;width:78px;text-align:center;top:686px">1</div>
<div class="a td" style="left:486px;top:686px">100770012</div>
<div class="a td" style="left:694px;top:686px">标品多规格01-50</div>
<div class="a td" style="left:1220px;top:686px">69100770012</div>
<div class="a td" style="left:1448px;top:686px">主商品规格</div>
<div class="a td" style="left:1657px;top:686px">20260121</div>
<div class="a td" style="left:1902px;top:686px">瓶</div>
<div class="a td" style="left:2100px;width:160px;text-align:right;top:686px">3.00</div>
<div class="a td" style="left:2310px;width:160px;text-align:right;top:686px">3.00</div>
<div class="a td" style="left:2497px;top:686px">15000000</div>
<div class="a td" style="left:392px;width:78px;text-align:center;top:744px">2</div>
<div class="a td" style="left:486px;top:744px">100770009</div>
<div class="a td" style="left:694px;top:744px">标品多规格01-10</div>
<div class="a td" style="left:1220px;top:744px">69100770009</div>
<div class="a td" style="left:1448px;top:744px">主商品规格</div>
<div class="a td" style="left:1657px;top:744px">20260121</div>
<div class="a td" style="left:1902px;top:744px">粒</div>
<div class="a td" style="left:2100px;width:160px;text-align:right;top:744px">3.00</div>
<div class="a td" style="left:2310px;width:160px;text-align:right;top:744px">3.00</div>
<div class="a td" style="left:2497px;top:744px">3000000</div>
<div class="a td" style="left:392px;width:78px;text-align:center;top:801px">3</div>
<div class="a td" style="left:486px;top:801px">100770014</div>
<div class="a td" style="left:694px;top:801px">标品多规格01-100</div>
<div class="a td" style="left:1220px;top:801px">69100770014</div>
<div class="a td" style="left:1448px;top:801px">主商品规格</div>
<div class="a td" style="left:1657px;top:801px">20260121</div>
<div class="a td" style="left:1902px;top:801px">库存</div>
<div class="a td" style="left:2100px;width:160px;text-align:right;top:801px">3.00</div>
<div class="a td" style="left:2310px;width:160px;text-align:right;top:801px">3.00</div>
<div class="a td" style="left:2497px;top:801px">30000000</div>

<!-- right strip -->
<div class="a" style="left:2803px;top:613px;width:36px;height:621px;background:#fafbfc;border-left:1.5px solid #e8e9ec"></div>
<div class="a" style="left:2803px;top:613px;width:36px;height:105px;background:#f7f8fa;border-left:1.5px solid #e8e9ec;border-bottom:1.5px solid #e8e9ec"></div>
<svg style="left:2813px;top:641px" width="18" height="17" viewBox="0 0 18 17"><rect x="1" y="1" width="16" height="15" fill="none" stroke="#111" stroke-width="2"/><path d="M1 2.5H17" stroke="#111" stroke-width="3"/><path d="M6.8 3V16M11.2 3V16" stroke="#111" stroke-width="1.8"/></svg>
<div class="a nw" style="left:2810px;top:668px;font-size:24px;line-height:30px;color:#1d2129;-webkit-text-stroke-width:0.35px">列</div>
<div class="a" style="left:2828px;top:730px;width:50px;height:209px;background:#b3c3f8;border-radius:8px"></div>
<svg style="left:2842px;top:746px" width="24" height="22" viewBox="0 0 24 22"><path d="M3 2H21A2 2 0 0 1 23 4V15A2 2 0 0 1 21 17H13L9 20.5V17H3A2 2 0 0 1 1 15V4A2 2 0 0 1 3 2Z" fill="none" stroke="#fff" stroke-width="2.4"/><path d="M6 8H14M6 12H11" stroke="#fff" stroke-width="2.2"/></svg>
<div class="a nw" style="left:2843px;top:775px;width:26px;font-size:24px;line-height:39.3px;color:#fff;-webkit-text-stroke-width:0.3px">帮<br>助<br>中<br>心</div>
<div class="a" style="left:2828px;top:957px;width:50px;height:209px;background:#fff;border-radius:8px;box-shadow:0 2px 8px rgba(0,0,0,.13)"></div>
<svg style="left:2841px;top:1008px" width="26" height="24" viewBox="0 0 26 24"><path d="M4 13V10A9 9 0 0 1 22 10V13" fill="none" stroke="#5d6070" stroke-width="2.4"/><rect x="1.5" y="12" width="4.5" height="7" rx="1.5" fill="none" stroke="#5d6070" stroke-width="2.2"/><path d="M20 19C19 21.5 17 22.5 13 22.5" fill="none" stroke="#5d6070" stroke-width="2.2"/></svg>
<div class="a nw" style="left:2843px;top:1044px;width:26px;font-size:24px;line-height:38px;color:#1d2129;-webkit-text-stroke-width:0.3px">客<br>服</div>

</body></html>
